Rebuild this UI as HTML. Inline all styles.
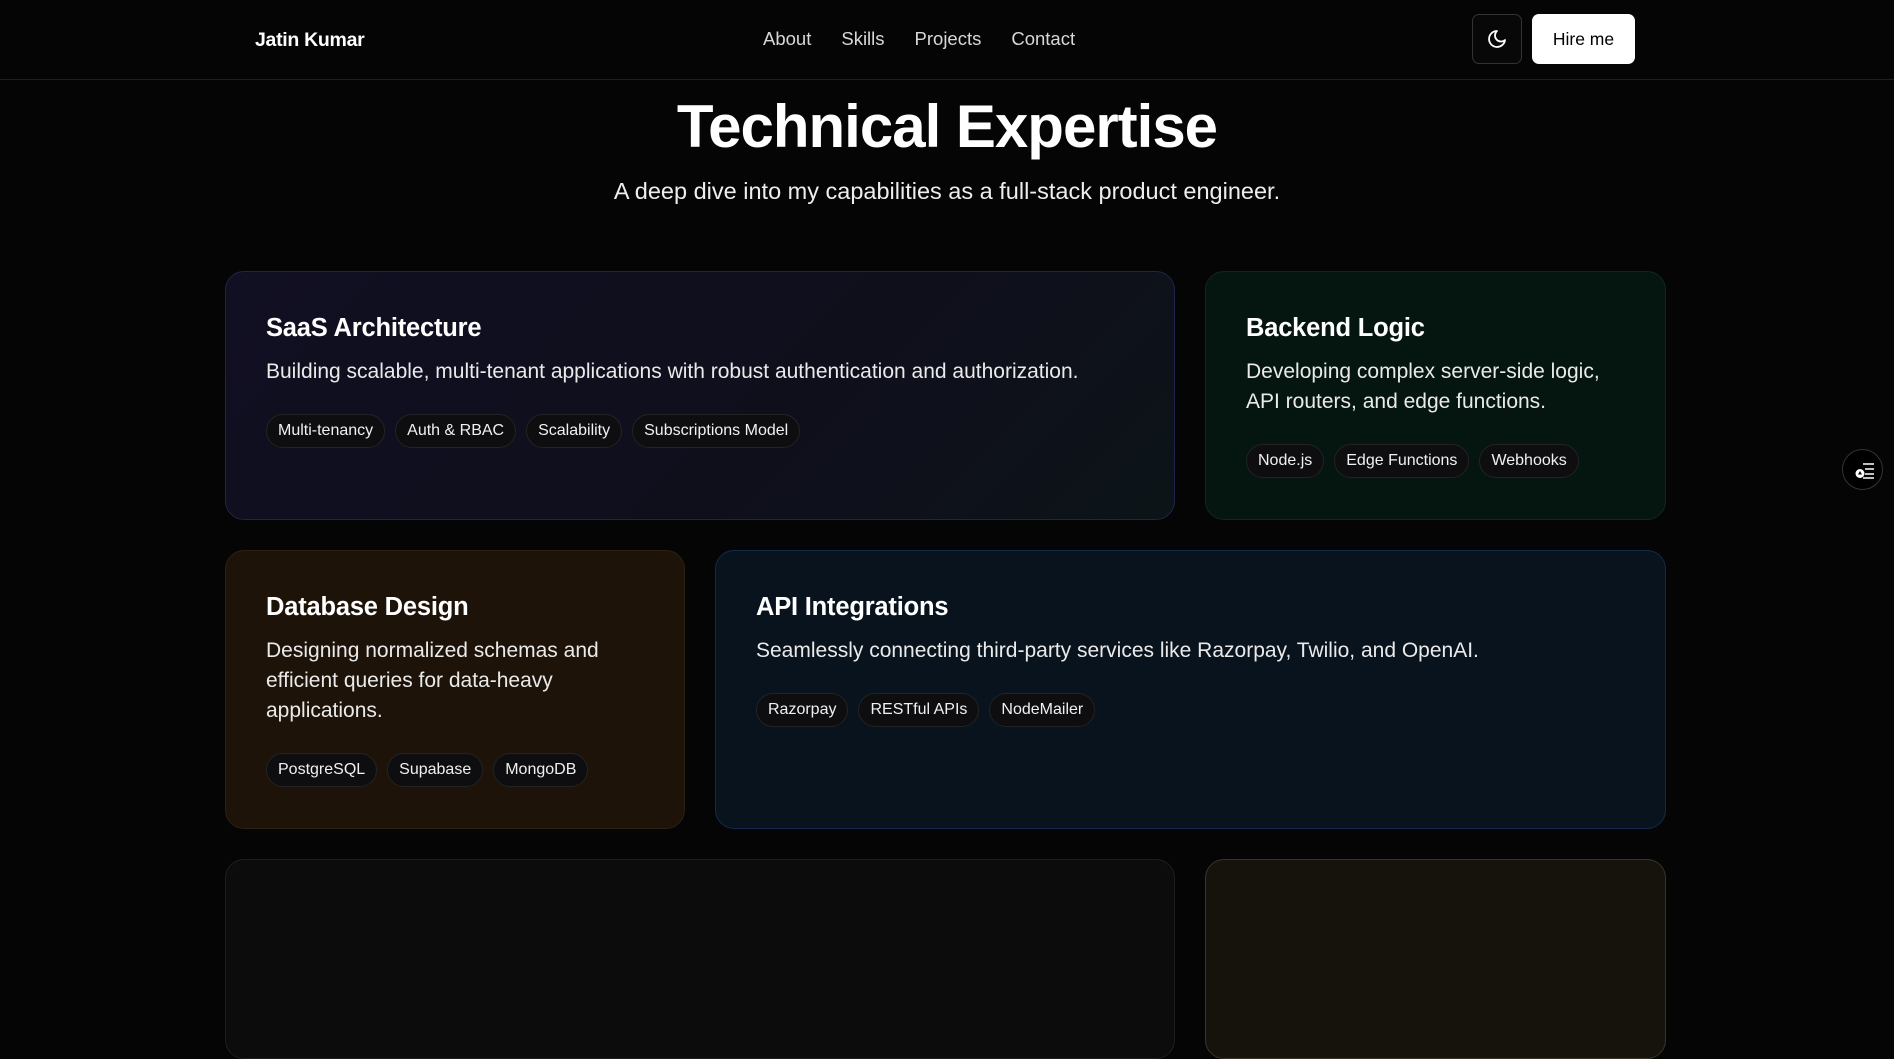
<!DOCTYPE html>
<html><head><meta charset="utf-8"><style>
*{box-sizing:border-box;margin:0;padding:0}
body{width:1894px;height:895px;overflow:hidden;background:#050505;color:#fff;font-family:"Liberation Sans",sans-serif;position:relative}
.nav{position:absolute;left:0;top:0;width:1894px;height:80px;border-bottom:1px solid #1f1f1f}
.logo{position:absolute;left:255px;top:29px;font-size:19.5px;font-weight:bold;letter-spacing:-0.3px}
.links{position:absolute;left:763px;top:28px;font-size:18.5px;color:#d8d8d8;white-space:nowrap}
.links span{margin-right:30px}
.moon{position:absolute;left:1472px;top:14px;width:50px;height:50px;border:1px solid #333;border-radius:7px;background:#080808}
.hire{position:absolute;left:1532px;top:14px;width:103px;height:50px;background:#fff;color:#000;border-radius:7px;font-size:17.5px;text-align:center;line-height:50px}
h1{position:absolute;left:0;width:1894px;text-align:center;top:92px;font-size:60px;letter-spacing:-1px;font-weight:bold}
.sub{position:absolute;left:0;width:1894px;text-align:center;top:178px;font-size:23.5px;color:#eee}
.card{position:absolute;border-radius:19px;padding:40px 40px;border:1px solid #222}
.card h3{font-size:25.5px;line-height:32px;font-weight:bold;letter-spacing:-0.2px}
.card p{margin-top:13px;font-size:21px;line-height:30px;color:#eaeaea}
.tags{margin-top:27px;display:flex;gap:10px}
.tag{height:34px;line-height:32px;padding:0 11px;border-radius:17px;background:#0e0e10;border:1px solid #232323;font-size:16px;color:#f0f0f0;white-space:nowrap}
.fab{position:absolute;left:1842px;top:449px;width:41px;height:41px;border-radius:50%;border:1px solid #333;background:#000}
</style></head><body>
<div class="nav">
<div class="logo">Jatin Kumar</div>
<div class="links"><span>About</span><span>Skills</span><span>Projects</span><span>Contact</span></div>
<div class="moon"><svg width="48" height="48" viewBox="0 0 48 48"><path d="M24 16a8 8 0 1 0 8 9 6 6 0 0 1-8-9z" fill="none" stroke="#fff" stroke-width="1.8" stroke-linejoin="round"/></svg></div>
<div class="hire">Hire me</div>
</div>
<h1>Technical Expertise</h1>
<div class="sub">A deep dive into my capabilities as a full-stack product engineer.</div>

<div class="card" style="left:225px;top:271px;width:950px;height:249px;background:linear-gradient(135deg,#110f22,#0f0f1c 60%,#0c1418);border-color:#23234a">
<h3>SaaS Architecture</h3>
<p>Building scalable, multi-tenant applications with robust authentication and authorization.</p>
<div class="tags"><span class="tag">Multi-tenancy</span><span class="tag">Auth &amp; RBAC</span><span class="tag">Scalability</span><span class="tag">Subscriptions Model</span></div>
</div>

<div class="card" style="left:1205px;top:271px;width:461px;height:249px;background:#05150f;border-color:#0e2a1e">
<h3>Backend Logic</h3>
<p>Developing complex server-side logic, API routers, and edge functions.</p>
<div class="tags"><span class="tag">Node.js</span><span class="tag">Edge Functions</span><span class="tag">Webhooks</span></div>
</div>

<div class="card" style="left:225px;top:550px;width:460px;height:279px;background:#1d1308;border-color:#2c2010">
<h3>Database Design</h3>
<p>Designing normalized schemas and efficient queries for data-heavy applications.</p>
<div class="tags"><span class="tag">PostgreSQL</span><span class="tag">Supabase</span><span class="tag">MongoDB</span></div>
</div>

<div class="card" style="left:715px;top:550px;width:951px;height:279px;background:#08131e;border-color:#15294a">
<h3>API Integrations</h3>
<p>Seamlessly connecting third-party services like Razorpay, Twilio, and OpenAI.</p>
<div class="tags"><span class="tag">Razorpay</span><span class="tag">RESTful APIs</span><span class="tag">NodeMailer</span></div>
</div>

<div class="card" style="left:225px;top:859px;width:950px;height:200px;background:#0c0c0c;border-color:#1e1e1e"></div>
<div class="card" style="left:1205px;top:859px;width:461px;height:200px;background:#16120c;border-color:#3a3428"></div>

<div class="fab"><svg width="41" height="41" viewBox="0 0 41 41"><path d="M20 14h11M22 19h9M22 24h9M20 28h11" stroke="#fff" stroke-width="1.6"/><circle cx="17" cy="23.5" r="4.5" fill="#fff"/><path d="M17 21l2 3.5h-4z" fill="#000"/></svg></div>
</body></html>
